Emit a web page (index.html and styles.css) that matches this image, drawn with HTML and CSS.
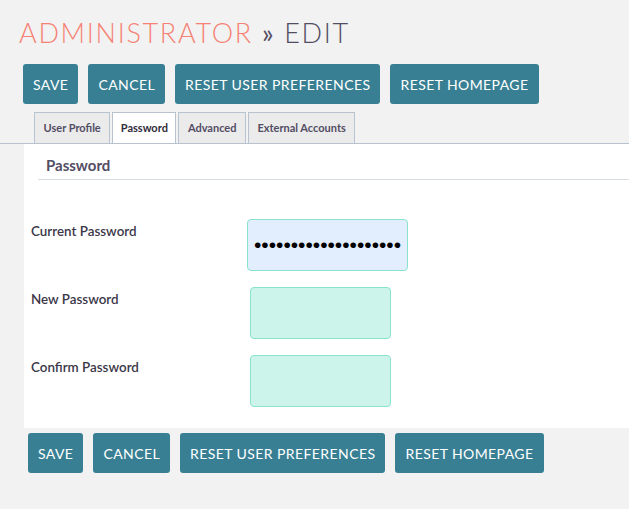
FILE: index.html
```html
<!DOCTYPE html>
<html lang="en">
<head>
  <meta charset="UTF-8">
  <meta name="viewport" content="width=device-width, initial-scale=1.0">
  <title>Administrator » Edit</title>
  <link rel="stylesheet" href="styles.css">
</head>
<body>

<div class="page">
  <!-- Judul -->
  <h1 class="title"><span class="module">Administrator</span> <span class="sep">»</span> <span class="action">Edit</span></h1>

  <!-- Tombol atas -->
  <div class="actions">
    <button class="btn">Save</button>
    <button class="btn">Cancel</button>
    <button class="btn">Reset User Preferences</button>
    <button class="btn">Reset Homepage</button>
  </div>

  <!-- Tab -->
  <ul class="tabs">
    <li>User Profile</li>
    <li class="active">Password</li>
    <li>Advanced</li>
    <li>External Accounts</li>
  </ul>

  <!-- Panel password -->
  <div class="panel">
    <h4 class="panel-title">Password</h4>
    <div class="form-row">
      <label for="oldPassword">Current Password</label>
      <input type="password" id="oldPassword" class="field current" value="abcdefghijklmnopqrst">
    </div>
    <div class="form-row">
      <label for="newPassword">New Password</label>
      <input type="password" id="newPassword" class="field">
    </div>
    <div class="form-row">
      <label for="confirmPassword">Confirm Password</label>
      <input type="password" id="confirmPassword" class="field">
    </div>
  </div>

  <!-- Tombol bawah -->
  <div class="actions bottom">
    <button class="btn">Save</button>
    <button class="btn">Cancel</button>
    <button class="btn">Reset User Preferences</button>
    <button class="btn">Reset Homepage</button>
  </div>
</div>

</body>
</html>
```

FILE: styles.css
```css
/* Halaman edit user */
body {
  margin: 0;
  background-color: #f2f2f2;
  font-family: Lato, "Open Sans", sans-serif;
  color: #534d64;
}
.page {
  padding-top: 17px;
}
.title {
  margin: 0 0 0 19px;
  font-size: 27px;
  font-weight: 300;
  letter-spacing: 1.7px;
  text-transform: uppercase;
  line-height: 32px;
}
.title .module {
  color: #f58274;
}
.title .sep {
  color: #534d64;
  font-weight: 400;
}
.title .action {
  color: #534d64;
}
.actions {
  display: flex;
  gap: 10px;
  margin: 15px 0 0 23px;
}
.actions.bottom {
  margin: 5px 0 0 28px;
}
.btn {
  height: 40px;
  padding: 0 10px;
  border: none;
  border-radius: 3px;
  background-color: #387f93;
  color: #fff;
  font-family: Lato, sans-serif;
  font-size: 14px;
  letter-spacing: 0.42px;
  text-transform: uppercase;
  cursor: pointer;
}
.btn:hover {
  background-color: #2d6a7b;
}
.tabs {
  display: flex;
  gap: 2px;
  list-style: none;
  margin: 8px 0 0 0;
  padding: 0 0 0 34px;
  border-bottom: 1px solid #b7c3ce;
}
.tabs li {
  height: 30px;
  line-height: 30px;
  padding: 0 8.5px;
  border: 1px solid #b7c3ce;
  border-bottom: none;
  background: #ebebeb;
  font-size: 11px;
  font-weight: 700;
  color: #534d64;
}
.tabs li.active {
  padding: 0 7.5px;
  background: #fff;
  color: #2f2b3a;
}
.panel {
  margin-left: 24px;
  height: 284px;
  background: #fff;
}
.panel-title {
  margin: 0 0 0 14px;
  padding: 12px 0 0 8px;
  height: 23px;
  border-bottom: 1px solid #d8dde2;
  font-size: 15px;
  font-weight: 700;
}
.form-row {
  display: flex;
  align-items: flex-start;
  height: 68px;
}
.form-row:first-of-type {
  margin-top: 39px;
}
.form-row label {
  width: 219px;
  padding: 4px 0 0 7px;
  font-size: 13.4px;
  font-weight: 600;
  color: #3b3748;
}
.field {
  box-sizing: border-box;
  width: 141px;
  height: 52px;
  margin-left: 0;
  padding: 0 6px;
  border: 1px solid #88e3cd;
  border-radius: 4px;
  background: #ccf4ea;
  font-size: 21px;
  letter-spacing: 0;
}
.field.current {
  width: 161px;
  margin-left: -3px;
  background: #e2eefe;
}
```
